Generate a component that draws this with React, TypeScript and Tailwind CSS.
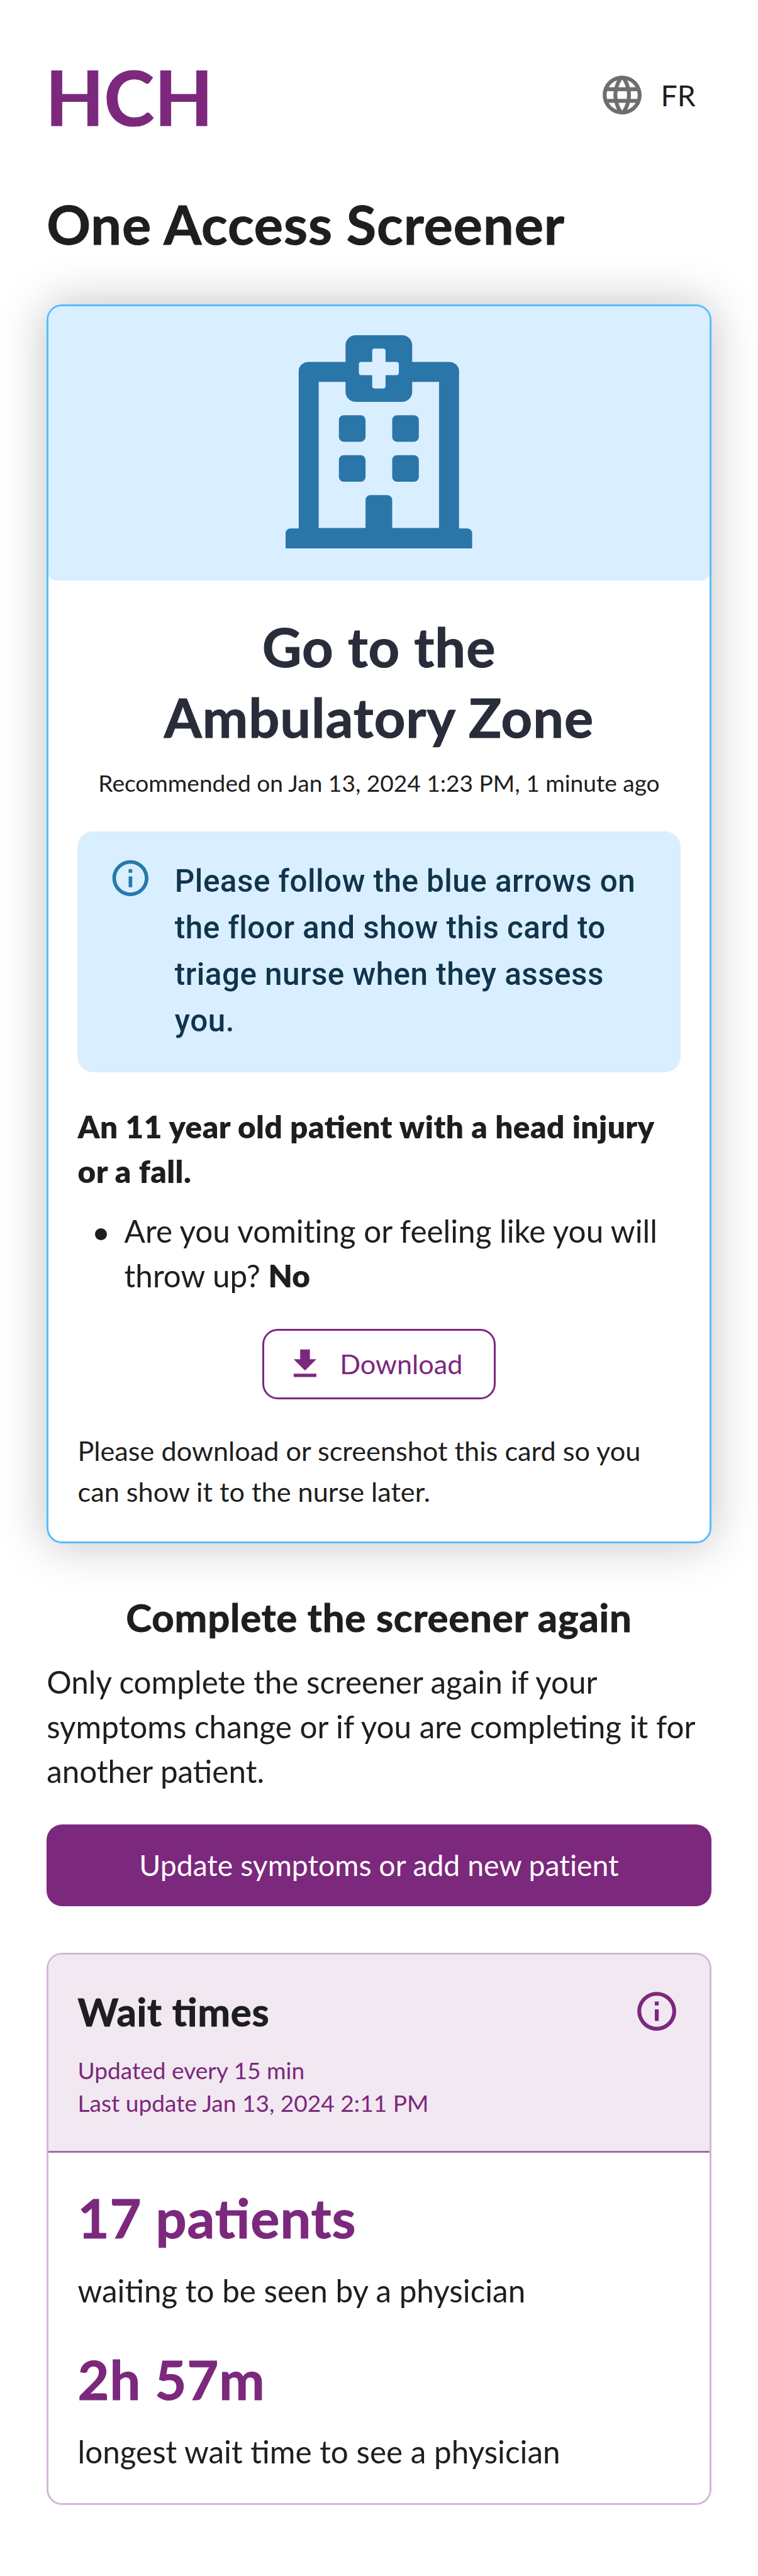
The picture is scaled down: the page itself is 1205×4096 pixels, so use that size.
import React from "react";
import { MdLanguage, MdInfoOutline } from "react-icons/md";
import { FaRegHospital } from "react-icons/fa";

function Header() {
  return (
    <header className="mt-[113.5px] flex h-[87.5px] items-start justify-between">
      <div className="mt-[-4px] ml-[-2px] text-[121px] leading-[87.5px] font-bold text-[#7b287d] [-webkit-text-stroke:1px_currentColor]">
        HCH
      </div>
      <button className="flex w-[179.2px] items-start gap-[24.8px]">
        <MdLanguage className="size-[74.15px] text-[#6e6e6e]" />
        <span className="text-[46.3px] leading-[74.15px]">FR</span>
      </button>
    </header>
  );
}

function ResultCard() {
  return (
    <section className="mt-[73.7px] h-[1969.2px] rounded-[24.7px] border-[3px] border-[#55bdff] bg-white shadow-[0_0_74px_rgba(0,0,0,0.25)]">
      <div className="flex h-[435.6px] justify-center rounded-t-[21.7px] rounded-b-[12px] bg-[#d9efff] pt-[45.8px]">
        <FaRegHospital className="h-[339px] w-[296.6px] text-[#2b76a8]" />
      </div>
      <div className="px-[46.35px]">
        <h2 className="mt-[49.4px] text-center text-[86.5px] leading-[111.8px] font-bold tracking-[1px] text-[#292d3a] [-webkit-text-stroke:1px_currentColor]">
          Go to the
          <br />
          Ambulatory Zone
        </h2>
        <p className="mt-[23.5px] text-center text-[37.08px] leading-[52px] whitespace-nowrap">
          Recommended on Jan 13, 2024 1:23 PM, 1 minute ago
        </p>
        <div className="mt-[50.5px] flex h-[382.9px] items-start gap-[36.1px] rounded-[24.7px] bg-[#d9efff] pl-[49.6px]">
          <MdInfoOutline className="mt-[39.8px] size-[68.7px] shrink-0 text-[#2779a9]" />
          <p className="mt-[41.8px] font-[Roboto,sans-serif] text-[49.44px] leading-[74.15px] font-medium tracking-[0.46px] whitespace-nowrap text-[#10344c]">
            Please follow the blue arrows on
            <br />
            the floor and show this card to
            <br />
            triage nurse when they assess
            <br />
            you.
          </p>
        </div>
        <p className="mt-[50.7px] text-[49.44px] leading-[71.06px] font-extrabold tracking-[0.45px] whitespace-nowrap [font-feature-settings:'liga'_1]">
          An 11 year old patient with a head injury
          <br />
          or a fall.
        </p>
        <ul className="mt-[24.3px]">
          <li className="flex items-start pl-[27.8px]">
            <span className="mt-[31.2px] mr-[27.8px] size-[18.5px] rounded-full bg-[#1e1e1e]" />
            <span className="text-[49.44px] leading-[71.06px] whitespace-nowrap [font-variant-ligatures:none]">
              Are you vomiting or feeling like you will
              <br />
              throw up? <b className="font-extrabold">No</b>
            </span>
          </li>
        </ul>
        <button className="mx-auto mt-[49.1px] flex h-[111.4px] w-[370.8px] items-center gap-[24.1px] rounded-[24.7px] border-[3px] border-[#7b287d] pl-[34.2px] text-[#7b287d]">
          <svg viewBox="0 0 24 24" className="size-[61.8px]" fill="currentColor">
            <path d="M19 9h-4V3H9v6H5l7 7 7-7zM5 18v2h14v-2H5z" />
          </svg>
          <span className="mt-[-2px] text-[43.26px] leading-[64px]">Download</span>
        </button>
        <p className="mt-[49.4px] text-[43.26px] leading-[64.9px] whitespace-nowrap">
          Please download or screenshot this card so you
          <br />
          can show it to the nurse later.
        </p>
      </div>
    </section>
  );
}

function Retake() {
  return (
    <section>
      <h3 className="mt-[74.3px] text-center text-[61.8px] leading-[86.5px] font-bold tracking-[0.8px] [-webkit-text-stroke:1px_currentColor]">
        Complete the screener again
      </h3>
      <p className="mt-[24.5px] text-[49.44px] leading-[71.06px] whitespace-nowrap">
        Only complete the screener again if your
        <br />
        symptoms change or if you are completing it for
        <br />
        another patient.
      </p>
      <button className="mt-[48.8px] flex h-[130px] w-full items-center justify-center rounded-[24.7px] bg-[#7b287d] text-[46.35px] text-white [font-variant-ligatures:none]">
        Update symptoms or add new patient
      </button>
    </section>
  );
}

function WaitTimes() {
  return (
    <section className="mt-[74.6px] h-[877.2px] rounded-[24.7px] border-[3px] border-[#d3b7d6]">
      <div className="h-[314.8px] rounded-t-[21.7px] border-b-[3px] border-[#a66aa9] bg-[#f2e8f1] px-[46.35px] pt-[46.7px]">
        <div className="flex items-start justify-between">
          <h3 className="text-[61.8px] leading-[86.5px] font-bold tracking-[0.8px] [-webkit-text-stroke:1px_currentColor] [font-feature-settings:'liga'_1]">
            Wait times
          </h3>
          <MdInfoOutline className="mt-[5.8px] size-[74.15px] text-[#7b287d]" />
        </div>
        <p className="mt-[24.6px] text-[37.08px] leading-[51.9px] text-[#7b287d]">
          Updated every 15 min
          <br />
          Last update Jan 13, 2024 2:11 PM
        </p>
      </div>
      <div className="px-[46.35px]">
        <p className="mt-[47.1px] text-[86.5px] leading-[111.2px] font-bold tracking-[0.9px] text-[#7b287d] [-webkit-text-stroke:1px_currentColor] [font-feature-settings:'liga'_1]">
          17 patients
        </p>
        <p className="mt-[25.1px] text-[49.44px] leading-[71.06px]">waiting to be seen by a physician</p>
        <p className="mt-[49.2px] text-[86.5px] leading-[111.2px] font-bold tracking-[0.9px] text-[#7b287d] [-webkit-text-stroke:1px_currentColor]">
          2h 57m
        </p>
        <p className="mt-[25.1px] text-[49.44px] leading-[71.06px]">longest wait time to see a physician</p>
      </div>
    </section>
  );
}

export default function App() {
  return (
    <div className="flow-root h-[4096px] w-[1205px] overflow-hidden bg-white px-[74.15px] font-[Lato,sans-serif] text-[#1e1e1e]">
      <Header />
      <h1 className="mt-[98.5px] text-[86.5px] leading-[111.2px] font-bold tracking-[0.95px] whitespace-nowrap [-webkit-text-stroke:1px_currentColor]">
        One Access Screener
      </h1>
      <ResultCard />
      <Retake />
      <WaitTimes />
    </div>
  );
}
